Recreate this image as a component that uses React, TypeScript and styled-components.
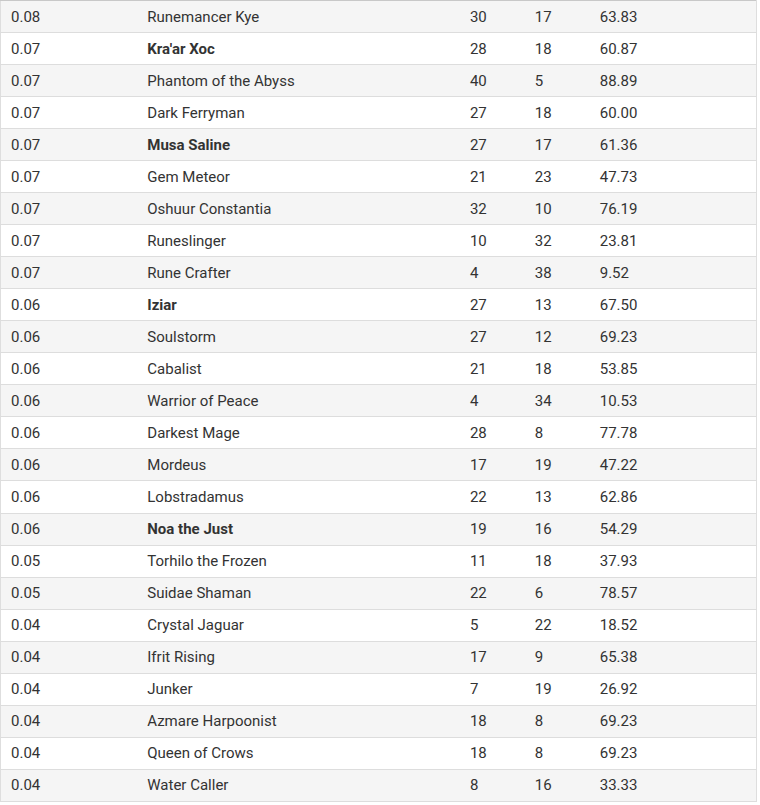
import React from "react";
import styled, { createGlobalStyle } from "styled-components";

const Global = createGlobalStyle`
  html, body { margin: 0; padding: 0; background: #fff; }
  body { font-family: Roboto, "Liberation Sans", sans-serif; }
`;

const Table = styled.table`
  width: 757px;
  border-collapse: collapse;
  border-top: 1px solid #c8c8c8;
  border-left: 1px solid #dedede;
  border-right: 1px solid #dedede;
  font-family: Roboto, "Liberation Sans", sans-serif;
  font-size: 15px;
  color: #333;
`;

const Row = styled.tr<{ $alt: boolean }>`
  background: ${(p) => (p.$alt ? "#f5f5f5" : "#ffffff")};
  border-bottom: 1px solid #dddddd;
`;

const Cell = styled.td<{ $w: number; $bold?: boolean }>`
  width: ${(p) => p.$w}px;
  padding: 0 0 0 10px;
  box-sizing: border-box;
  height: 32.04px;
  font-weight: ${(p) => (p.$bold ? 700 : 400)};
  white-space: nowrap;
`;

type R = [string, string, number, number, string, boolean?];

const rows: R[] = [
  ["0.08", "Runemancer Kye", 30, 17, "63.83"],
  ["0.07", "Kra'ar Xoc", 28, 18, "60.87", true],
  ["0.07", "Phantom of the Abyss", 40, 5, "88.89"],
  ["0.07", "Dark Ferryman", 27, 18, "60.00"],
  ["0.07", "Musa Saline", 27, 17, "61.36", true],
  ["0.07", "Gem Meteor", 21, 23, "47.73"],
  ["0.07", "Oshuur Constantia", 32, 10, "76.19"],
  ["0.07", "Runeslinger", 10, 32, "23.81"],
  ["0.07", "Rune Crafter", 4, 38, "9.52"],
  ["0.06", "Iziar", 27, 13, "67.50", true],
  ["0.06", "Soulstorm", 27, 12, "69.23"],
  ["0.06", "Cabalist", 21, 18, "53.85"],
  ["0.06", "Warrior of Peace", 4, 34, "10.53"],
  ["0.06", "Darkest Mage", 28, 8, "77.78"],
  ["0.06", "Mordeus", 17, 19, "47.22"],
  ["0.06", "Lobstradamus", 22, 13, "62.86"],
  ["0.06", "Noa the Just", 19, 16, "54.29", true],
  ["0.05", "Torhilo the Frozen", 11, 18, "37.93"],
  ["0.05", "Suidae Shaman", 22, 6, "78.57"],
  ["0.04", "Crystal Jaguar", 5, 22, "18.52"],
  ["0.04", "Ifrit Rising", 17, 9, "65.38"],
  ["0.04", "Junker", 7, 19, "26.92"],
  ["0.04", "Azmare Harpoonist", 18, 8, "69.23"],
  ["0.04", "Queen of Crows", 18, 8, "69.23"],
  ["0.04", "Water Caller", 8, 16, "33.33"],
];

export default function App() {
  return (
    <>
      <Global />
      <Table>
        <tbody>
          {rows.map((r, i) => (
            <Row key={i} $alt={i % 2 === 0}>
              <Cell $w={137}>{r[0]}</Cell>
              <Cell $w={323} $bold={r[5]}>{r[1]}</Cell>
              <Cell $w={65}>{r[2]}</Cell>
              <Cell $w={65}>{r[3]}</Cell>
              <Cell $w={167}>{r[4]}</Cell>
            </Row>
          ))}
        </tbody>
      </Table>
    </>
  );
}
